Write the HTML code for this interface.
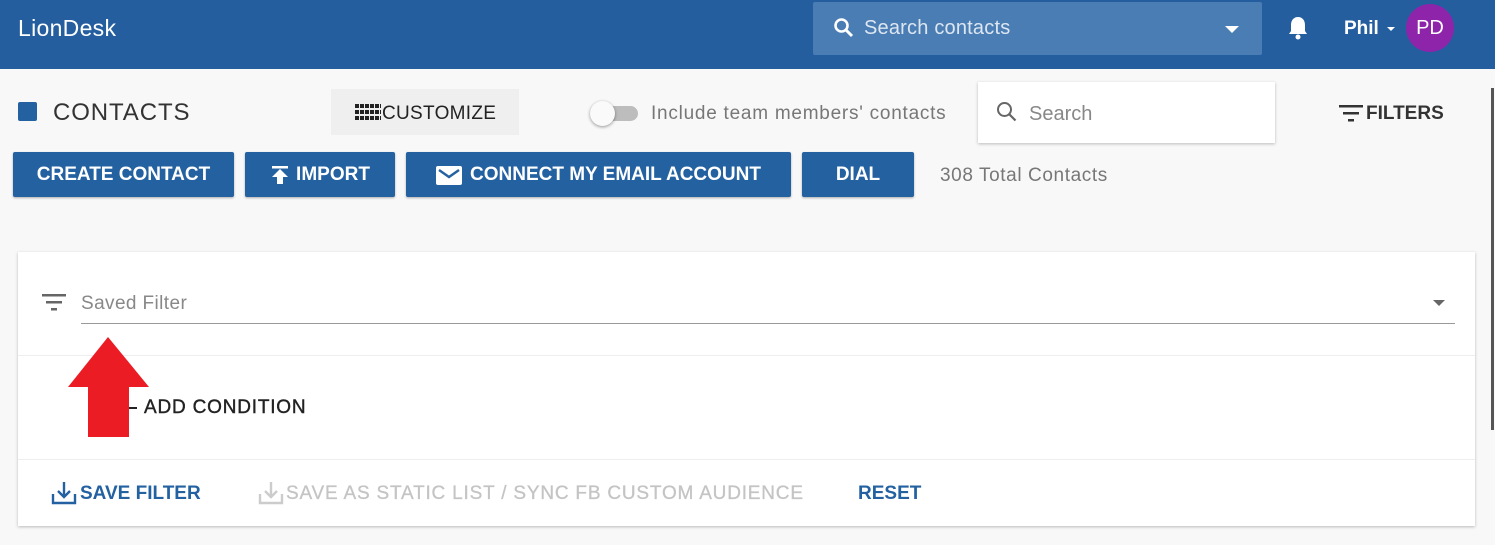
<!DOCTYPE html>
<html><head><meta charset="utf-8"><style>
*{box-sizing:border-box;margin:0;padding:0}
body{width:1495px;height:545px;background:#f8f8f8;font-family:"Liberation Sans",sans-serif;position:relative;overflow:hidden}
.abs{position:absolute}
.hdr{left:0;top:0;width:1495px;height:69px;background:#245e9f}
.btn{position:absolute;top:152px;height:45px;background:#2461a1;color:#fff;font-weight:bold;font-size:19px;display:flex;align-items:center;justify-content:center;border-radius:2px;box-shadow:0 1px 2px rgba(0,0,0,.3)}
</style></head><body>
<div class="abs hdr"></div>
<div class="abs" style="left:18px;top:15px;color:#fff;font-size:23px;letter-spacing:0.3px">LionDesk</div>
<div class="abs" style="left:813px;top:2px;width:449px;height:53px;background:#4a7db4;border-radius:2px"></div>
<svg class="abs" style="left:832px;top:16px" width="24" height="24" viewBox="0 0 24 24"><circle cx="9.5" cy="9.5" r="6" fill="none" stroke="#fff" stroke-width="2.6"/><path d="M14 14l6 6" stroke="#fff" stroke-width="3"/></svg>
<div class="abs" style="left:864px;top:17px;color:#dde6f1;font-size:20px;letter-spacing:0.2px">Search contacts</div>
<div class="abs" style="left:1225px;top:26px;border-left:7px solid transparent;border-right:7px solid transparent;border-top:7px solid #fff"></div>
<svg class="abs" style="left:1287px;top:15px" width="22" height="26" viewBox="0 0 22 26"><path d="M11 2c-4 0-7 3-7 8v6l-2 3h18l-2-3v-6c0-5-3-8-7-8z" fill="#fff"/><circle cx="11" cy="22" r="2.5" fill="#fff"/></svg>
<div class="abs" style="left:1344px;top:18px;color:#fff;font-size:19px;font-weight:bold">Phil</div>
<div class="abs" style="left:1387px;top:27px;border-left:4px solid transparent;border-right:4px solid transparent;border-top:4px solid #fff"></div>
<div class="abs" style="left:1406px;top:4px;width:48px;height:48px;border-radius:50%;background:#8e24aa;color:#fff;font-size:20px;display:flex;align-items:center;justify-content:center">PD</div>

<div class="abs" style="left:18px;top:102px;width:19px;height:19px;background:#2461a1;border-radius:2px"></div>
<div class="abs" style="left:53px;top:99px;font-size:24px;color:#333;letter-spacing:0.9px">CONTACTS</div>
<div class="abs" style="left:331px;top:89px;width:188px;height:46px;background:#efefef"></div>
<svg class="abs" style="left:355px;top:104px" width="26" height="16"><g fill="#222"><rect x="0" y="0" width="26" height="4"/><rect x="0" y="6" width="26" height="4"/><rect x="0" y="12" width="26" height="4"/></g><g fill="#efefef"><rect x="4" width="1" height="16"/><rect x="9" width="1" height="16"/><rect x="14" width="1" height="16"/><rect x="19" width="1" height="16"/><rect x="24" width="1" height="16"/></g></svg>
<div class="abs" style="left:382px;top:103px;font-size:19px;color:#222;letter-spacing:0.3px">CUSTOMIZE</div>
<div class="abs" style="left:596px;top:106px;width:42px;height:15px;background:#bdbdbd;border-radius:8px"></div>
<div class="abs" style="left:590px;top:101px;width:25px;height:25px;background:#fafafa;border-radius:50%;box-shadow:0 1px 3px rgba(0,0,0,.4)"></div>
<div class="abs" style="left:651px;top:103px;font-size:19px;color:#777;letter-spacing:0.75px">Include team members' contacts</div>
<div class="abs" style="left:978px;top:82px;width:297px;height:61px;background:#fff;box-shadow:0 1px 3px rgba(0,0,0,.25)"></div>
<svg class="abs" style="left:995px;top:100px" width="24" height="24" viewBox="0 0 24 24"><circle cx="9.5" cy="9.5" r="6.5" fill="none" stroke="#666" stroke-width="2"/><path d="M14.5 14.5l6 6" stroke="#666" stroke-width="2.2"/></svg>
<div class="abs" style="left:1029px;top:103px;font-size:20px;color:#888">Search</div>
<svg class="abs" style="left:1339px;top:104px" width="24" height="18"><g fill="#333"><rect x="0" y="1" width="24" height="2.5"/><rect x="4" y="8" width="16" height="2.5"/><rect x="9" y="15" width="6" height="2.5"/></g></svg>
<div class="abs" style="left:1366px;top:103px;font-size:19px;font-weight:bold;color:#333">FILTERS</div>
<div class="abs" style="left:1491px;top:88px;width:3px;height:342px;background:#555"></div>

<div class="btn" style="left:13px;width:221px">CREATE CONTACT</div>
<div class="btn" style="left:245px;width:150px"><svg width="20" height="20" style="margin-right:6px"><rect x="2" y="1" width="16" height="2.5" fill="#fff"/><path d="M10 4l8 8h-5v7h-6v-7h-5z" fill="#fff"/></svg>IMPORT</div>
<div class="btn" style="left:406px;width:385px"><svg width="26" height="20" style="margin-right:8px"><rect x="0" y="1" width="26" height="19" rx="2" fill="#fff"/><path d="M3 5l10 7 10-7" fill="none" stroke="#2461a1" stroke-width="2.4"/></svg>CONNECT MY EMAIL ACCOUNT</div>
<div class="btn" style="left:802px;width:112px">DIAL</div>
<div class="abs" style="left:940px;top:165px;font-size:19px;color:#777;letter-spacing:0.6px">308 Total Contacts</div>

<div class="abs" style="left:18px;top:252px;width:1457px;height:274px;background:#fff;box-shadow:0 1px 3px rgba(0,0,0,.25)"></div>
<svg class="abs" style="left:42px;top:294px" width="24" height="18"><g fill="#666"><rect x="0" y="0" width="24" height="2.5"/><rect x="4" y="7" width="16" height="2.5"/><rect x="9" y="14" width="6" height="2.5"/></g></svg>
<div class="abs" style="left:81px;top:293px;font-size:19px;color:#888;letter-spacing:0.4px">Saved Filter</div>
<div class="abs" style="left:1433px;top:300px;border-left:6px solid transparent;border-right:6px solid transparent;border-top:6px solid #666"></div>
<div class="abs" style="left:81px;top:323px;width:1374px;height:1px;background:#999"></div>
<div class="abs" style="left:18px;top:355px;width:1457px;height:1px;background:#eee"></div>
<div class="abs" style="left:18px;top:459px;width:1457px;height:1px;background:#eee"></div>
<div class="abs" style="left:144px;top:397px;font-size:19px;color:#222;letter-spacing:0.8px;-webkit-text-stroke:0.4px #222">ADD CONDITION</div>
<div class="abs" style="left:129px;top:407px;width:8px;height:2px;background:#222"></div>
<svg class="abs" style="left:67px;top:336px" width="84" height="102"><path d="M41 1L82 51H62V101H21V51H1Z" fill="#ec1c24"/></svg>
<svg class="abs" style="left:51px;top:481px" width="26" height="24" viewBox="0 0 26 24"><path d="M13 1v14M7 10l6 6 6-6M2 13v9h22v-9" fill="none" stroke="#2461a1" stroke-width="2.4"/></svg>
<div class="abs" style="left:80px;top:483px;font-size:19px;font-weight:bold;color:#2461a1">SAVE FILTER</div>
<svg class="abs" style="left:258px;top:481px" width="26" height="24" viewBox="0 0 26 24"><path d="M13 1v14M7 10l6 6 6-6M2 13v9h22v-9" fill="none" stroke="#ccc" stroke-width="2.4"/></svg>
<div class="abs" style="left:286px;top:483px;font-size:19px;color:#c4c4c4;letter-spacing:0.8px;-webkit-text-stroke:0.3px #c4c4c4">SAVE AS STATIC LIST / SYNC FB CUSTOM AUDIENCE</div>
<div class="abs" style="left:858px;top:483px;font-size:19px;font-weight:bold;color:#2461a1">RESET</div>
</body></html>
